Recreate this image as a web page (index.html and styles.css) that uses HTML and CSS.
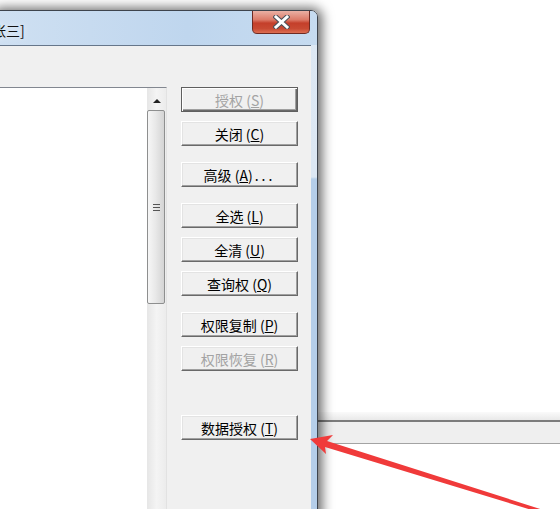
FILE: index.html
```html
<!DOCTYPE html>
<html lang="zh-CN">
<head>
    <meta charset="UTF-8">
    <title>授权</title>
    <link rel="stylesheet" href="styles.css">
</head>
<body>
    <div class="desk">
        <!-- window behind, only its bar shows -->
        <div class="back-bar">
            <div class="back-top"></div>
            <div class="back-mid"></div>
        </div>

        <div class="window">
            <div class="titlebar">
                <span class="title">张三]</span>
                <div class="close">
                    <svg width="17" height="14" viewBox="0 0 17 14">
                        <path d="M3 2 L14 12 M14 2 L3 12" stroke="#4a4f58" stroke-width="5" stroke-linecap="square"/>
                        <path d="M3 2 L14 12 M14 2 L3 12" stroke="#fff" stroke-width="3" stroke-linecap="square"/>
                    </svg>
                </div>
            </div>

            <div class="frame">
                <div class="client">
                    <div class="listbox">
                        <div class="list-items"></div>
                        <div class="vscroll">
                            <div class="arrow-up"><span></span></div>
                            <div class="thumb"><span class="grip"></span></div>
                        </div>
                    </div>

                    <div class="buttons">
                        <button class="btn default" disabled>授权 (<u>S</u>)</button>
                        <button class="btn">关闭 (<u>C</u>)</button>
                        <button class="btn group">高级 (<u>A</u>)<span class="dots">...</span></button>
                        <button class="btn group">全选 (<u>L</u>)</button>
                        <button class="btn">全清 (<u>U</u>)</button>
                        <button class="btn">查询权 (<u>Q</u>)</button>
                        <button class="btn group">权限复制 (<u>P</u>)</button>
                        <button class="btn" disabled>权限恢复 (<u>R</u>)</button>
                        <button class="btn last">数据授权 (<u>T</u>)</button>
                    </div>
                </div>
            </div>
        </div>

        <svg class="mark" width="560" height="509" viewBox="0 0 560 509">
            <polygon fill="#f03a3a" points="310,439 333,435 327,441 559,515 558,518 325,447 326,454"/>
        </svg>
    </div>
</body>
</html>
```

FILE: styles.css
```css
body {
    margin: 0;
    background-color: #fff;
    font-family: "Noto Sans CJK SC", "Liberation Sans", sans-serif;
}
.desk {
    position: relative;
    width: 560px;
    height: 509px;
    overflow: hidden;
    background-color: #fff;
}
.back-bar {
    position: absolute;
    left: 300px;
    top: 412px;
    width: 260px;
}
.back-top {
    height: 8px;
    background: linear-gradient(#fafafa, #e9e9e9);
    border-bottom: 2px solid #7c7c7c;
}
.back-mid {
    height: 21px;
    background-color: #efefef;
    border-bottom: 1px solid #a3a3a3;
}
.window {
    position: absolute;
    left: -8px;
    top: 10px;
    width: 326px;
    height: 520px;
    box-sizing: border-box;
    border: 1px solid #3e444d;
    border-radius: 7px 7px 0 0;
    background: linear-gradient(#dde8f4 0, #dce7f3 166px, #b5cee9 168px, #b5cee9 100%);
    box-shadow: 2px 0 12px 2px rgba(0, 0, 0, 0.6);
    display: flex;
    flex-direction: column;
}
.titlebar {
    height: 34px;
    display: flex;
    align-items: flex-start;
    border-radius: 6px 6px 0 0;
    background: linear-gradient(90deg, #cfe0f2 0, #bfd6ee 60%, #c6dbf0 100%);
}
.title {
    font-size: 14px;
    line-height: 18px;
    margin-top: 10px;
    margin-left: -1px;
    color: #111;
    text-shadow: 0 0 6px #fff;
}
.close {
    margin-left: auto;
    margin-right: 7px;
    width: 58px;
    height: 23px;
    box-sizing: border-box;
    border: 1px solid #6e2a22;
    border-top: none;
    border-radius: 0 0 5px 5px;
    background: linear-gradient(#eab0a4 0, #dc7a68 40%, #c43f2a 55%, #c84a33 80%, #dd6e52 100%);
    display: flex;
    align-items: center;
    justify-content: center;
}
.frame {
    flex: 1;
    padding: 0 6px 0 7px;
    display: flex;
}
.client {
    flex: 1;
    border-top: 1px solid #66768a;
    background-color: #f0f0f0;
    padding-top: 41px;
    display: flex;
    align-items: flex-start;
    gap: 14px;
}
.listbox {
    margin-left: -2px;
    width: 169px;
    height: 440px;
    box-sizing: border-box;
    border: 1px solid #828790;
    border-right-color: #e2e2e2;
    border-bottom: none;
    display: flex;
}
.list-items {
    flex: 1;
    background-color: #fff;
}
.vscroll {
    width: 19px;
    background: linear-gradient(90deg, #e6e6e6, #f4f4f4 50%, #ececec);
    display: flex;
    flex-direction: column;
}
.arrow-up {
    height: 21px;
    display: flex;
    align-items: center;
    justify-content: center;
}
.arrow-up span {
    width: 0;
    height: 0;
    border-left: 4px solid transparent;
    border-right: 4px solid transparent;
    border-bottom: 4px solid #222;
    margin-top: 4px;
}
.thumb {
    height: 194px;
    margin: 1px 1px 0 0;
    box-sizing: border-box;
    border: 1px solid #8e8f8f;
    border-radius: 2px;
    background: linear-gradient(90deg, #f6f6f6, #e9e9e9 45%, #d4d4d4 100%);
    display: flex;
    align-items: center;
    justify-content: center;
}
.grip {
    width: 7px;
    height: 5px;
    border-top: 1px solid #555;
    border-bottom: 1px solid #555;
    background: linear-gradient(transparent 2px, #555 2px, #555 3px, transparent 3px);
}
.buttons {
    width: 117px;
    display: flex;
    flex-direction: column;
    gap: 9px;
}
.btn {
    height: 25px;
    padding: 0;
    margin: 0;
    font-family: "Noto Sans CJK SC", "Liberation Sans", sans-serif;
    font-size: 14px;
    line-height: 20px;
    color: #000;
    background-color: #f0f0f0;
    border: 1px solid;
    border-color: #fff #696969 #696969 #fff;
    box-shadow: inset -1px -1px #a0a0a0, inset 1px 1px #e3e3e3;
}
.btn u {
    text-underline-offset: 1px;
}
.btn .dots {
    letter-spacing: 3px;
    margin-left: 2px;
}
.btn:disabled {
    color: #a3a3a3;
}
.btn.default {
    border-color: #5f5f5f;
    box-shadow: inset 1px 1px #fff, inset -1px -1px #696969, inset -2px -2px #a0a0a0;
}
.btn.group {
    margin-top: 7px;
}
.btn.last {
    margin-top: 35px;
}
.mark {
    position: absolute;
    left: 0;
    top: 0;
    pointer-events: none;
}
```
